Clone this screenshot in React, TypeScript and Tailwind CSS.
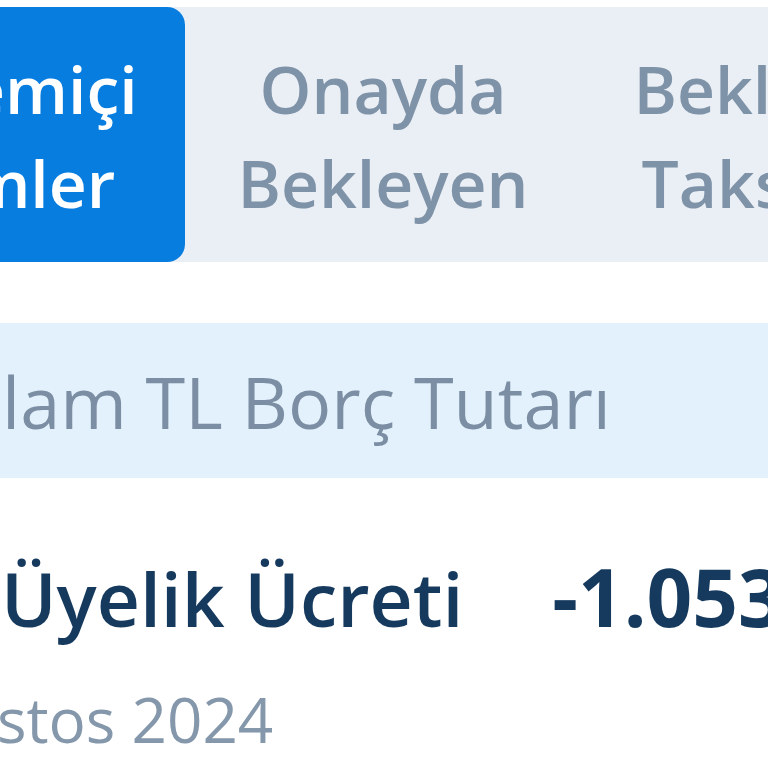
import React from "react";

const tabs = [
  { id: "donem", lines: ["Dönemiçi", "İşlemler"], active: true },
  { id: "onay", lines: ["Onayda", "Bekleyen"], active: false },
  { id: "taksit", lines: ["Bekleyen", "Taksitler"], active: false },
];

export default function App() {
  return (
    <div className="w-[768px] h-[768px] overflow-hidden bg-white font-['Open_Sans','Liberation_Sans',sans-serif]">
      {/* segmented tabs */}
      <div className="pt-[7px]">
        <div className="-ml-[211px] flex w-[1188px] rounded-[18px] bg-[#eaeef5]">
          {tabs.map((t) => (
            <div
              key={t.id}
              className={
                t.active
                  ? "flex h-[255px] w-[396px] shrink-0 items-center justify-center rounded-[18px] bg-[#087de0] text-center text-[66px] font-semibold leading-[94px] text-white"
                  : "flex h-[255px] w-[396px] shrink-0 items-center justify-center text-center text-[66px] font-semibold leading-[94px] text-[#7f93a8]"
              }
            >
              <span className="whitespace-nowrap">
                {t.lines[0]}
                <br />
                {t.lines[1]}
              </span>
            </div>
          ))}
        </div>
      </div>

      {/* total header */}
      <div className="mt-[61px] flex h-[155px] items-center bg-[#e3f1fc]">
        <span className="-ml-[125px] whitespace-nowrap text-[72px] leading-none text-[#7b8ea3]">
          Toplam TL Borç Tutarı
        </span>
      </div>

      {/* transaction row */}
      <div className="-ml-[172px] pt-[78px]">
        <div className="flex items-baseline gap-[89px] whitespace-nowrap">
          <span className="text-[75px] font-semibold leading-none text-[#163a5e]">Kart Üyelik Ücreti</span>
          <span className="text-[80px] font-bold leading-none text-[#163a5e]">-1.053,56 TL</span>
        </div>
        <div className="mt-[52px] -ml-[29px] whitespace-nowrap text-[62px] leading-none text-[#8497ab]">14 Ağustos 2024</div>
      </div>
    </div>
  );
}
